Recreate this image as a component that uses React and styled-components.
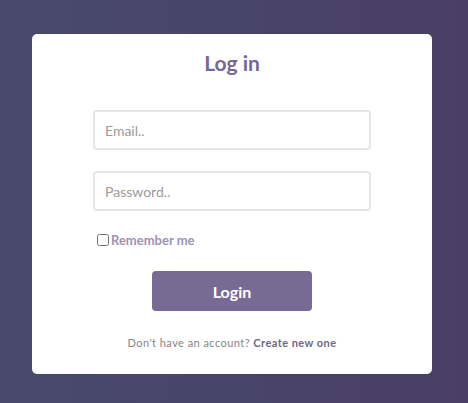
import React from 'react';
import styled, {createGlobalStyle} from 'styled-components';

const GlobalStyle = createGlobalStyle`
  html, body {
    margin: 0;
    padding: 0;
    height: 100%;
  }
  body {
    font-family: Lato, "Open Sans", sans-serif;
  }
`;

const Page = styled.div`
  width: 468px;
  height: 403px;
  background: linear-gradient(90deg, #474a6c 0%, #4a3e66 100%);
  padding: 34px 36px 0 32px;
  box-sizing: border-box;
`;

const Card = styled.form`
  width: 400px;
  height: 340px;
  background: #fff;
  border-radius: 5px;
  display: flex;
  flex-direction: column;
  align-items: center;
  box-sizing: border-box;
  padding-top: 16px;
`;

const Title = styled.h1`
  margin: 0 0 34px;
  font-size: 21px;
  font-weight: 700;
  color: #766892;
  line-height: 26px;
`;

const Input = styled.input`
  width: 278px;
  height: 40px;
  box-sizing: border-box;
  border: 2px solid #e6e6e6;
  border-radius: 4px;
  padding: 0 10px;
  font-family: Lato, sans-serif;
  font-size: 14px;
  margin-bottom: 21px;
  outline: none;
  &::placeholder {
    color: #9b9b9b;
  }
`;

const CheckRow = styled.label`
  width: 278px;
  display: flex;
  align-items: center;
  gap: 2px;
  padding-left: 8px;
  box-sizing: border-box;
  font-size: 13px;
  font-weight: 700;
  color: #9d94b2;
`;

const Check = styled.input`
  width: 12px;
  height: 12px;
  margin: 0 0 0 -4px;
`;

const Button = styled.button`
  margin-top: 23px;
  width: 160px;
  height: 40px;
  border: none;
  border-radius: 4px;
  background: #786a93;
  color: #fff;
  font-family: Lato, sans-serif;
  font-size: 16px;
  font-weight: 700;
`;

const Footer = styled.p`
  margin: 25px 0 0;
  font-size: 11px;
  color: #858585;
  letter-spacing: 0.45px;
  b {
    color: #6e6785;
  }
`;

export default function App() {
    return (
        <>
            <GlobalStyle/>
            <Page>
                <Card onSubmit={e => e.preventDefault()}>
                    <Title>Log in</Title>
                    <Input type="text" placeholder="Email.."/>
                    <Input type="password" placeholder="Password.."/>
                    <CheckRow>
                        <Check type="checkbox"/>
                        Remember me
                    </CheckRow>
                    <Button type="submit">Login</Button>
                    <Footer>Don't have an account? <b>Create new one</b></Footer>
                </Card>
            </Page>
        </>
    );
}
